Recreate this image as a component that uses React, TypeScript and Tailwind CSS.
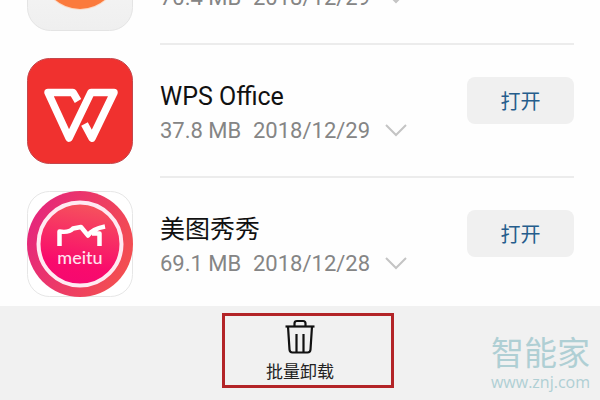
import type { ReactNode } from "react";

const SANS = "font-[Roboto,'Noto_Sans_CJK_SC',sans-serif]";

type AppItem = {
  name: string;
  size: string;
  date: string;
  icon: ReactNode;
};

function OrangeIcon() {
  return (
    <svg viewBox="0 0 106 106" className="size-full" aria-hidden="true">
      <defs>
        <linearGradient id="tile" x1="0" y1="0" x2="0" y2="1">
          <stop offset="0" stopColor="#fafafa" />
          <stop offset="1" stopColor="#efefef" />
        </linearGradient>
      </defs>
      <rect x="0.5" y="0.5" width="105" height="105" rx="23" fill="url(#tile)" stroke="#e4e4e4" />
      <circle cx="53" cy="46" r="39" fill="#fbd9c5" />
      <circle cx="53" cy="46" r="38" fill="#fb7a3c" />
    </svg>
  );
}

function WpsIcon() {
  return (
    <svg viewBox="0 0 106 106" className="size-full" aria-hidden="true">
      <rect x="0.5" y="0.5" width="105" height="105" rx="22" fill="#f0312f" stroke="#c4474c" />
      <g fill="none" stroke="#fff" strokeWidth="7.5" strokeLinejoin="round">
        <path d="M51 43 L46 34.500 H21 L42 80 L64 34.500 H87 L65 80 L57.500 66" />
      </g>
    </svg>
  );
}

function MeituIcon() {
  return (
    <svg viewBox="0 0 106 106" className="size-full" aria-hidden="true">
      <defs>
        <linearGradient id="ring" x1="0" y1="0.3" x2="1" y2="0.7">
          <stop offset="0" stopColor="#e5267c" />
          <stop offset="1" stopColor="#f4504f" />
        </linearGradient>
        <linearGradient id="disc" x1="0.6" y1="0" x2="0.4" y2="1">
          <stop offset="0" stopColor="#f5555c" />
          <stop offset="0.75" stopColor="#f90b6c" />
          <stop offset="1" stopColor="#f50870" />
        </linearGradient>
      </defs>
      <rect x="0.5" y="0.5" width="105" height="105" rx="22" fill="#fff" stroke="#e6e6e6" />
      <circle cx="53" cy="53" r="53" fill="url(#ring)" />
      <circle cx="53" cy="53" r="41.5" fill="url(#disc)" stroke="#ffeaf2" strokeWidth="4" />
      <path
        d="M32.500 55 V40.500 Q42 42 46 37.500 L54 36 L61 44.500 Q65 38 78 35.500 M65 42.500 H72.500 V55"
        fill="none"
        stroke="#fff"
        strokeWidth="4.5"
        strokeLinejoin="round"
      />
      <text
        x="53"
        y="73"
        textAnchor="middle"
        fill="#ffe3ee"
        fontSize="18"
        className="font-[Lato,sans-serif] font-medium"
      >
        meitu
      </text>
    </svg>
  );
}

const APPS: AppItem[] = [
  { name: "Orange", size: "70.4 MB", date: "2018/12/29", icon: <OrangeIcon /> },
  { name: "WPS Office", size: "37.8 MB", date: "2018/12/29", icon: <WpsIcon /> },
  { name: "美图秀秀", size: "69.1 MB", date: "2018/12/28", icon: <MeituIcon /> },
];

function AppRow({ app }: { app: AppItem }) {
  return (
    <li className="flex h-[133px] shrink-0 pr-[26px] pl-[27px]">
      <div className="mt-[13px] size-[106px] shrink-0">{app.icon}</div>
      <div className="ml-[27px] flex flex-1 items-start justify-between border-b-2 border-[#ececec]">
        <div className="pt-[34px]">
          <h2 className="text-[25px] leading-9 text-[#111]">{app.name}</h2>
          <div className="flex items-center text-[22px] leading-8 text-[#858585]">
            <span className="w-[93px]">{app.size}</span>
            <span>{app.date}</span>
            <button type="button" aria-label="详情" className="ml-3.5">
              <svg viewBox="0 0 24 14" className="h-[14px] w-6" aria-hidden="true">
                <path d="M2 1 L12 11 L22 1" fill="none" stroke="#c4c4c4" strokeWidth="2" />
              </svg>
            </button>
          </div>
        </div>
        <button
          type="button"
          className="mt-8 h-[47px] w-[107px] rounded-lg bg-[#f0f0f0] pt-0.5 text-[20px] leading-7 text-[#255d8c]"
        >
          打开
        </button>
      </div>
    </li>
  );
}

function TrashIcon() {
  return (
    <svg viewBox="0 0 32 36" className="h-9 w-8" aria-hidden="true">
      <g fill="none" stroke="#111" strokeWidth="2.2" strokeLinejoin="round">
        <path d="M1.500 8.500 H30.500" />
        <path d="M10.500 8 V5.500 Q10.500 3 13 3 H19 Q21.500 3 21.500 5.500 V8" />
        <path d="M4 8.500 L5.500 31.500 Q5.700 34.500 8.500 34.500 H23.500 Q26.300 34.500 26.500 31.500 L28 8.500" />
        <path d="M12.500 16 V34 M19.500 16 V34" />
      </g>
    </svg>
  );
}

export default function App() {
  return (
    <main className={`flex h-screen flex-col overflow-hidden bg-[#fefefe] ${SANS}`}>
      <ul className="-mt-[88px] flex min-h-0 flex-1 flex-col overflow-hidden">
        {APPS.map((app) => (
          <AppRow key={app.name} app={app} />
        ))}
      </ul>
      <footer className="relative flex h-[94px] shrink-0 justify-center bg-[#f1f1f1]">
        <button type="button" className="flex flex-col items-center pt-3 text-[#222]">
          <TrashIcon />
          <span className="mt-1.5 text-[17px] leading-6">批量卸载</span>
        </button>
        <div className="pointer-events-none absolute top-[7px] left-1/2 -ml-[78px] h-[75px] w-[172px] border-3 border-[#b32427]" />
        <div className="pointer-events-none absolute right-2.5 bottom-2 flex flex-col items-center text-[#afcfd4]">
          <span className="text-[33px] leading-9">智能家</span>
          <span className="font-['Open_Sans',sans-serif] text-[16px] leading-5">www.znj.com</span>
        </div>
      </footer>
    </main>
  );
}
